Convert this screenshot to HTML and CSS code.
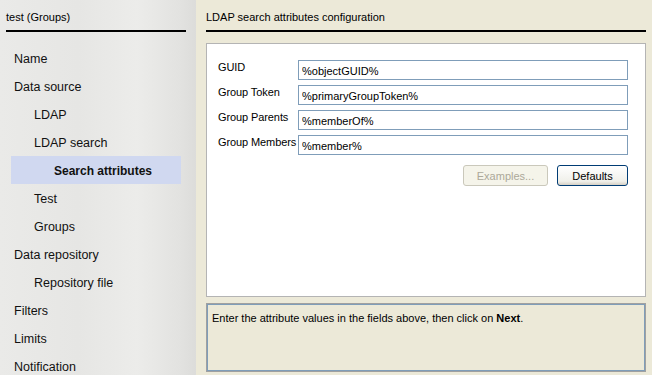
FILE: index.html
```html
<!DOCTYPE html>
<html lang="en">
<head>
    <meta charset="UTF-8">
    <link rel="stylesheet" href="styles.css">
    <title>LDAP search attributes configuration</title>
</head>
<body>

    <div class="sidebar">
        <div class="sidebar-title">test (Groups)</div>
        <ul class="steps">
            <li class="step">Name</li>
            <li class="step">Data source</li>
            <li class="step sub">LDAP</li>
            <li class="step sub">LDAP search</li>
            <li class="step subsub active">Search attributes</li>
            <li class="step sub">Test</li>
            <li class="step sub">Groups</li>
            <li class="step">Data repository</li>
            <li class="step sub">Repository file</li>
            <li class="step">Filters</li>
            <li class="step">Limits</li>
            <li class="step">Notification</li>
        </ul>
    </div>

    <div class="main">
        <div class="main-title">LDAP search attributes configuration</div>

        <div class="form-box">
            <div class="field">
                <label for="guid">GUID</label>
                <input type="text" id="guid" value="%objectGUID%">
            </div>
            <div class="field">
                <label for="token">Group Token</label>
                <input type="text" id="token" value="%primaryGroupToken%">
            </div>
            <div class="field">
                <label for="parents">Group Parents</label>
                <input type="text" id="parents" value="%memberOf%">
            </div>
            <div class="field">
                <label for="members">Group Members</label>
                <input type="text" id="members" value="%member%">
            </div>
            <div class="buttons">
                <button class="btn btn-examples" disabled>Examples...</button>
                <button class="btn btn-defaults">Defaults</button>
            </div>
        </div>

        <div class="help-box">
            Enter the attribute values in the fields above, then click on <b>Next</b>.
        </div>
    </div>

</body>
</html>
```

FILE: styles.css
```css
body {
    margin: 0;
    display: flex;
    height: 375px;
    overflow: hidden;
    font-family: 'Liberation Sans', Arial, sans-serif;
    color: #000;
    background-color: #ece9d8;
}

.sidebar {
    width: 196px;
    flex-shrink: 0;
    box-sizing: border-box;
    padding: 0 10px 0 0;
    background: linear-gradient(90deg, #eaeae8 0%, #e6e6e4 40%, #ececea 70%, #e2e2e0 92%, #dcdcda 100%);
}

.sidebar-title {
    margin-left: 6px;
    height: 32px;
    line-height: 34px;
    font-size: 11px;
    box-sizing: border-box;
    border-bottom: 2px solid #000;
}

.steps {
    list-style: none;
    margin: 12px 0 0 11px;
    padding: 0;
    width: 170px;
}

.step {
    height: 28px;
    line-height: 31px;
    font-size: 12.5px;
    padding-left: 3px;
    color: #111;
}

.step.sub {
    padding-left: 23px;
}

.step.subsub {
    padding-left: 43px;
}

.step.active {
    background-color: #d0d8f0;
    font-weight: bold;
    font-size: 12px;
}

.main {
    flex: 1;
    padding: 0 6px 0 10px;
    display: flex;
    flex-direction: column;
    font-size: 11px;
}

.main-title {
    height: 32px;
    line-height: 34px;
    box-sizing: border-box;
    border-bottom: 2px solid #000;
}

.form-box {
    margin-top: 11px;
    height: 254px;
    box-sizing: border-box;
    background-color: #fff;
    border: 1px solid #b4b4b4;
    padding: 16px 17px 0 11px;
}

.field {
    display: flex;
    align-items: flex-start;
    height: 20px;
    margin-bottom: 5px;
}

.field label {
    width: 80px;
    flex-shrink: 0;
    padding-top: 1px;
    letter-spacing: -0.1px;
}

.field input {
    flex: 1;
    height: 20px;
    box-sizing: border-box;
    border: 1px solid #7f9db9;
    padding: 1px 3px 0;
    font-family: inherit;
    font-size: 11px;
    color: #000;
    outline: none;
}

.buttons {
    display: flex;
    justify-content: flex-end;
    gap: 9px;
    margin-top: 10px;
}

.btn {
    height: 21px;
    box-sizing: border-box;
    border-radius: 3px;
    font-family: inherit;
    font-size: 11px;
    padding: 0;
}

.btn-examples {
    width: 85px;
    border: 1px solid #cac8bb;
    background-color: #f5f4ea;
    color: #aca899;
}

.btn-defaults {
    width: 71px;
    border: 1px solid #003c74;
    background: linear-gradient(#ffffff, #f0f0ea 80%, #d6d0c5);
    color: #000;
}

.help-box {
    margin-top: 6px;
    height: 69px;
    box-sizing: border-box;
    border: 1px solid #a0a0a0;
    box-shadow: inset 0 0 0 1px #7f9db9;
    padding: 8px 5px;
    background-color: #ece9d8;
}
```
